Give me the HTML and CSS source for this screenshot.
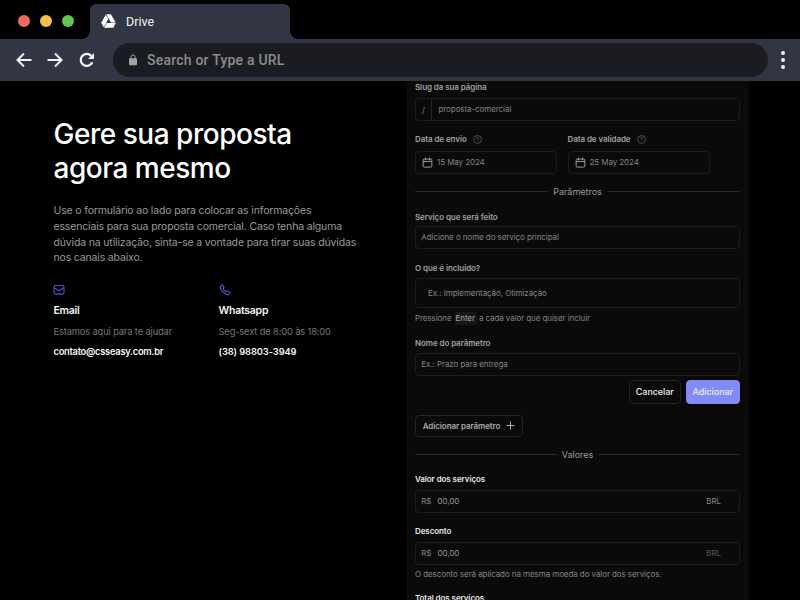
FILE: index.html
```html
<!DOCTYPE html>
<html lang="pt-BR">
<head>
<meta charset="utf-8">
<title>Drive</title>
<link rel="stylesheet" href="styles.css">
</head>
<body>
<svg class="defs" width="0" height="0">
  <symbol id="help" viewBox="0 0 24 24"><circle cx="12" cy="12" r="10.5"/><path d="M9 9.3c.3-4 6.3-3.500 6.100.2 0 2.200-3.100 2.500-3.100 4.500M12 17v1"/></symbol>
  <symbol id="calendar" viewBox="0 0 24 24"><rect x="2.500" y="4.500" width="19" height="17.500" rx="2.500"/><path d="M7.500 1.500v6M16.500 1.500v6M2.500 10h19"/></symbol>
</svg>
<header class="browser">
  <div class="tabbar">
    <div class="lights"><i class="red"></i><i class="yellow"></i><i class="green"></i></div>
    <div class="tab">
      <svg class="drive" viewBox="0 0 15 14"><path d="M5.200.2h4.700l4.800 8.400H10zM4.800.7 7.300 5.100 2.800 13.200.2 8.800zM5.700 9.100h9L12.300 13.700H3.100z"/></svg>
      <span>Drive</span>
    </div>
  </div>
  <div class="toolbar">
    <svg class="nav back" viewBox="0 0 16 16"><path d="M15.500 8H1.500M8 1.500 1.500 8 8 14.500"/></svg>
    <svg class="nav forward" viewBox="0 0 16 16"><path d="M.5 8h14M8 1.500 14.500 8 8 14.500"/></svg>
    <svg class="nav reload" viewBox="0 0 16 16"><path d="M13.300 10.300A6 6 0 1 1 12.300 4"/><path class="solid" d="M15 1v6H9z"/></svg>
    <div class="url">
      <svg class="lock" viewBox="0 0 9 12"><rect x=".5" y="4.300" width="8" height="7" rx="1"/><path d="M2.400 5V3a2.100 2.100 0 0 1 4.200 0v2"/></svg>
      <span>Search or Type a URL</span>
    </div>
    <div class="dots"><i></i><i></i><i></i></div>
  </div>
</header>
<main class="page">
  <section class="intro">
    <h1>Gere sua proposta<br>agora mesmo</h1>
    <p class="lead">Use o formulário ao lado para colocar as informações<br>essenciais para sua proposta comercial. Caso tenha alguma<br>dúvida na utilização, sinta-se a vontade para tirar suas dúvidas<br>nos canais abaixo.</p>
    <div class="contacts">
      <div class="contact">
        <svg viewBox="0 0 12 12"><rect x="1" y="1.500" width="10" height="8.600" rx="1.600"/><path d="m1.200 3.600 3.900 2.700q.9.600 1.800 0l3.900-2.700"/></svg>
        <h2>Email</h2>
        <p>Estamos aqui para te ajudar</p>
        <strong>contato@csseasy.com.br</strong>
      </div>
      <div class="contact">
        <svg viewBox="0 0 12 12"><path d="M1.300 2.300 2.800 1q.5-.3.900.2l1.200 1.900q.2.500-.2.900l-.7.700q.8 1.900 2.800 3l.9-.8q.4-.3.900 0l1.900 1.200q.5.400.1.900l-1 1.300q-.4.500-1.200.3Q2.600 8.600 1.100 3.300q-.1-.6.200-1z"/></svg>
        <h2>Whatsapp</h2>
        <p>Seg-sext de 8:00 às 18:00</p>
        <strong class="phone">(38) 98803-3949</strong>
      </div>
    </div>
  </section>
  <form class="panel">
    <div class="field">
      <label>Slug da sua página</label>
      <div class="input slug"><span class="slash">/</span><span>proposta-comercial</span></div>
    </div>
    <div class="dates">
      <div class="field">
        <label>Data de envio <svg class="help"><use href="#help"/></svg></label>
        <div class="input date"><svg><use href="#calendar"/></svg><span>15 May 2024</span></div>
      </div>
      <div class="field">
        <label>Data de validade <svg class="help"><use href="#help"/></svg></label>
        <div class="input date"><svg><use href="#calendar"/></svg><span>25 May 2024</span></div>
      </div>
    </div>
    <div class="divider params"><span>Parâmetros</span></div>
    <div class="field service">
      <label>Serviço que será feito</label>
      <div class="input"><span>Adicione o nome do serviço principal</span></div>
    </div>
    <div class="field included">
      <label>O que é incluido?</label>
      <div class="input tall"><span>Ex.: Implementação, Otimização</span></div>
      <p class="hint enter">Pressione <kbd>Enter</kbd> a cada valor que quiser incluir</p>
    </div>
    <div class="field name">
      <label>Nome do parâmetro</label>
      <div class="input"><span>Ex.: Prazo para entrega</span></div>
    </div>
    <div class="actions">
      <button type="button" class="cancel">Cancelar</button>
      <button type="button" class="add">Adicionar</button>
    </div>
    <button type="button" class="more">Adicionar parâmetro <svg viewBox="0 0 9 9"><path d="M4.500.5v8M.5 4.500h8"/></svg></button>
    <div class="divider values"><span>Valores</span></div>
    <div class="field price">
      <label>Valor dos serviços</label>
      <div class="input money"><span>R$</span><span class="amount">00,00</span><span class="currency">BRL</span></div>
    </div>
    <div class="field price discount">
      <label>Desconto</label>
      <div class="input money"><span>R$</span><span class="amount">00,00</span><span class="currency dim">BRL</span></div>
      <p class="hint">O desconto será aplicado na mesma moeda do valor dos serviços.</p>
    </div>
    <div class="field price total"><label>Total dos serviços</label></div>
  </form>
</main>
</body>
</html>
```
FILE: styles.css
```css
* { box-sizing: border-box; }
body { margin: 0; width: 800px; height: 600px; overflow: hidden; background: #000; font-family: Inter, sans-serif; white-space: nowrap; }
h1, h2, p { margin: 0; }
svg { flex: none; fill: none; stroke: currentColor; }
.defs { display: block; height: 0; }

.browser { font-family: Roboto, sans-serif; }
.tabbar { display: flex; height: 39px; padding-top: 4px; background: #000; }
.lights { display: flex; gap: 10px; width: 90px; padding: 11px 0 0 18px; }
.lights i { width: 12px; height: 12px; border-radius: 50%; }
.red { background: #ed6a5e; }
.yellow { background: #f5bf4f; }
.green { background: #61c554; }
.tab { position: relative; display: flex; align-items: center; gap: 10px; width: 200px; height: 35px; padding-left: 11px; border-radius: 6px 6px 0 0; background: #323644; color: #f4f4f5; font-size: 12.5px; }
.tab::before, .tab::after { content: ""; position: absolute; bottom: 0; width: 8px; height: 8px; }
.tab::before { right: 100%; background: radial-gradient(circle at 0 0, #000 7.500px, #323644 8px); }
.tab::after { left: 100%; background: radial-gradient(circle at 100% 0, #000 7.500px, #323644 8px); }
.drive { width: 15px; height: 14px; margin-bottom: 2px; fill: #fff; stroke: none; }
.toolbar { display: flex; align-items: center; height: 42px; padding-left: 16px; background: #323644; color: #f1f1f1; }
.nav { width: 16px; height: 16px; stroke-width: 2; }
.forward, .reload { margin-left: 15px; }
.reload { margin-left: 16px; stroke-width: 2.300; }
.solid { fill: currentColor; stroke: none; }
.url { display: flex; align-items: center; gap: 9px; width: 655px; height: 34px; margin-left: 18px; padding-left: 15px; border-radius: 17px; background: #1b1c21; color: #8b8c8e; font-size: 14px; font-weight: 500; letter-spacing: .22px; }
.lock { width: 10px; height: 12px; color: #a0a4a8; }
.lock rect { fill: currentColor; stroke: none; }
.dots { display: grid; gap: 3px; margin-left: 13px; }
.dots i { width: 4px; height: 4px; border-radius: 50%; background: #f1f1f1; }

.page { display: flex; height: 519px; }
.intro { width: 406px; padding: 36px 0 0 53.500px; }
h1 { color: #fff; font-size: 28px; line-height: 34px; font-weight: 500; letter-spacing: -.48px; }
.lead { margin-top: 18px; color: #999; font-size: 10.500px; line-height: 15.800px; letter-spacing: -.16px; }
.contacts { display: grid; grid-template-columns: 165px 165px; margin-top: 18px; }
.contact svg { display: block; width: 12px; height: 12px; color: #7048cc; stroke-width: 1.100; }
.contact:first-child svg { margin-left: -.5px; }
.contact h2 { margin-top: 7.800px; color: #f5f5f5; font-size: 10.500px; line-height: 14px; font-weight: 600; letter-spacing: -.25px; }
.contact p { margin-top: 7.500px; color: #777; font-size: 9.300px; line-height: 14px; letter-spacing: -.13px; }
.contact strong { display: block; margin-top: 6px; color: #f5f5f5; font-size: 9.300px; line-height: 14px; font-weight: 600; letter-spacing: -.25px; }
.contact .phone { letter-spacing: -.09px; }

.panel { width: 343px; padding: 0 9px; background: #0a0a0a; color: #858585; font-size: 8px; letter-spacing: -.08px; }
.field label { display: flex; align-items: center; gap: 6px; height: 12px; color: #a0a0a0; font-weight: 600; }
.input { display: flex; align-items: center; height: 23px; margin-top: 5px; padding: 0 0 1px 5.300px; border: 1px solid #1d1d1d; border-radius: 4px; }
.slug { padding: 0; }
.slug span:last-child { padding-bottom: 1px; }
.slash { display: grid; place-items: center; align-self: stretch; width: 16px; margin-right: 6.500px; border-right: 1px solid #222; }
.help { width: 9px; height: 9px; stroke-width: 1.800; color: #707070; }
.dates { display: grid; grid-template-columns: 142px 142px; gap: 10.500px; margin-top: 12px; }
.date { margin-top: 6px; gap: 4px; padding-left: 6px; }
.date svg { width: 11px; height: 11px; stroke-width: 2; color: #aaa; }
.divider { display: flex; align-items: center; gap: 5px; height: 12px; color: #999; font-size: 9px; letter-spacing: 0; }
.divider::before, .divider::after { content: ""; flex: 1; height: 1px; background: #292929; }
.params { margin-top: 11px; }
.service { margin-top: 14px; }
.service .input { margin-top: 3px; }
.included { margin-top: 13px; }
.tall { height: 30px; margin-top: 4px; padding: 0 0 0 12px; }
.hint { height: 12px; margin-top: 3px; line-height: 12px; }
.enter { display: flex; align-items: center; height: 14px; gap: 2px; }
kbd { height: 13px; padding: 0 2px; border-radius: 2px; background: #171717; color: #aaa; font: inherit; line-height: 13px; }
.name { margin-top: 12px; }
.name .input { margin-top: 4px; }
.actions { display: flex; justify-content: flex-end; gap: 4.500px; margin-top: 4px; }
button { display: flex; align-items: center; justify-content: center; height: 24px; padding: 0 0 1px; border: 1px solid #242424; border-radius: 4px; background: transparent; color: #ededed; font: 500 9px Inter, sans-serif; letter-spacing: -.08px; }
.cancel { width: 52.500px; }
.add { width: 54.500px; border-color: #818cf8; background: #818cf8; }
.more { gap: 6px; width: 108px; height: 22px; margin-top: 11px; color: #aaa; font-size: 8px; font-weight: 600; }
.more svg { width: 9px; height: 9px; }
.values { margin-top: 11px; }
.price { margin-top: 13px; }
.price label { color: #e8e8e8; }
.discount { margin-top: 12px; }
.money .amount { margin-left: 6px; color: #999; }
.currency { margin-left: auto; margin-right: 18px; }
.dim { color: #595959; }
.total { margin-top: 12px; }
```
